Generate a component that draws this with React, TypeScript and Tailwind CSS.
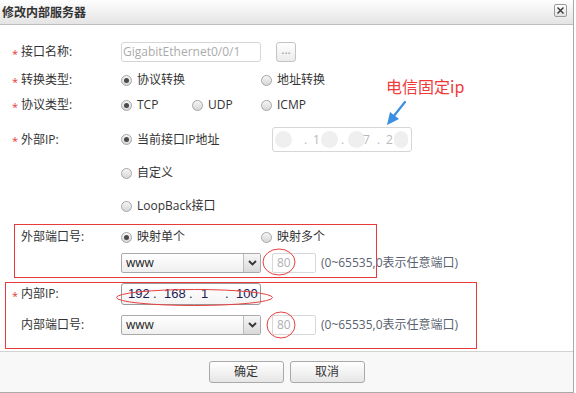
import React from "react";

function Radio({ checked }: { checked?: boolean }) {
  return (
    <span className="w-[11px] h-[11px] rounded-full border border-[#a6a6a6] bg-linear-to-b from-[#f6f6f6] to-[#d6d6d6] flex items-center justify-center shrink-0">
      {checked && <span className="w-[5px] h-[5px] rounded-full bg-[#4a4a4a]" />}
    </span>
  );
}

function RadioItem({ checked, label, width }: { checked?: boolean; label: string; width?: string }) {
  return (
    <div className={`flex items-center gap-[5px] shrink-0 ${width ?? ""}`}>
      <Radio checked={checked} />
      <span className="text-[#333] whitespace-nowrap">{label}</span>
    </div>
  );
}

function Label({ text, req, width }: { text: string; req?: boolean; width: string }) {
  return (
    <div className={`flex items-center shrink-0 ${width}`}>
      {req !== undefined && (
        <span className="w-[9px] text-[#e23b3b] text-[11px] leading-none pt-[2px]">{req ? "*" : ""}</span>
      )}
      <span className="text-[#333] whitespace-nowrap">{text}</span>
    </div>
  );
}

function Select() {
  return (
    <div className="w-[140px] h-[20px] border border-[#a9a9a9] rounded-[2px] flex bg-linear-to-b from-white to-[#efefef] shrink-0">
      <span className="flex-1 pl-[4px] text-[#222] leading-[18px] text-[12px]">www</span>
      <span className="w-[17px] border-l border-[#bcbcbc] bg-linear-to-b from-[#f7f7f7] to-[#d9d9d9] flex items-center justify-center">
        <svg width="9" height="6" viewBox="0 0 9 6">
          <path d="M1 1 L4.5 4.5 L8 1" stroke="#333" strokeWidth="1.8" fill="none" />
        </svg>
      </span>
    </div>
  );
}

function PortRow() {
  return (
    <div className="flex items-center h-[20px] shrink-0">
      <Select />
      <div className="ml-[11px] w-[44px] h-[20px] shrink-0 border border-[#d8d8d8] rounded-[2px] bg-white text-[#b0b0b0] pl-[4px] leading-[18px]">
        80
      </div>
      <span className="ml-[5px] shrink-0 text-[#5a6270] whitespace-nowrap">(0~65535,0表示任意端口)</span>
    </div>
  );
}

export default function App() {
  return (
    <div className="relative w-[576px] h-[393px] bg-white font-['Open_Sans','Noto_Sans_CJK_SC',sans-serif] text-[12px] overflow-hidden">
      <div className="w-[574px] h-[393px] border-r border-b border-[#a9a9a9] flex flex-col">
        {/* Title bar */}
        <div className="h-[25px] shrink-0 border-b border-[#bdbdbd] bg-linear-to-b from-[#fefefe] to-[#e4e4e4] flex items-center justify-between pl-[2px] pr-[6px]">
          <span className="font-bold text-[#333] text-[12px] font-['Noto_Sans_CJK_SC',sans-serif]">修改内部服务器</span>
          <span className="w-[13px] h-[13px] border border-[#9a9a9a] rounded-[2px] bg-linear-to-b from-white to-[#e2e2e2] flex items-center justify-center mt-[-3px]">
            <svg width="9" height="9" viewBox="0 0 9 9">
              <path d="M1.5 1.5 L7.5 7.5 M7.5 1.5 L1.5 7.5" stroke="#333" strokeWidth="1.4" />
            </svg>
          </span>
        </div>

        {/* Body */}
        <div className="flex-1 flex flex-col">
          <div className="mt-[17px] flex items-center h-[20px] pl-[12px]">
            <Label text="接口名称:" req width="w-[109px]" />
            <div className="w-[140px] h-[20px] border border-[#d6d6d6] rounded-[3px] text-[#ababab] pl-[1px] leading-[18px]">
              GigabitEthernet0/0/1
            </div>
            <div className="ml-[15px] w-[20px] h-[20px] border border-[#c4c4c4] rounded-[3px] bg-linear-to-b from-white to-[#ebebeb] text-[#999] text-center leading-[14px]">
              ...
            </div>
          </div>

          <div className="mt-[8px] flex items-center h-[20px] pl-[12px]">
            <Label text="转换类型:" req width="w-[109px]" />
            <RadioItem checked label="协议转换" width="w-[140px]" />
            <RadioItem label="地址转换" />
          </div>

          <div className="mt-[5px] flex items-center h-[20px] pl-[12px]">
            <Label text="协议类型:" req width="w-[109px]" />
            <RadioItem checked label="TCP" width="w-[71px]" />
            <RadioItem label="UDP" width="w-[69px]" />
            <RadioItem label="ICMP" />
          </div>

          <div className="mt-[12px] flex items-center h-[25px] pl-[12px]">
            <Label text="外部IP:" req width="w-[109px]" />
            <RadioItem checked label="当前接口IP地址" width="w-[151px]" />
            <div className="relative w-[140px] h-[25px] border border-[#d6d6d6] rounded-[3px] bg-white text-[#b8b8b8] flex items-center">
              <span className="absolute left-[2px] top-[3px] w-[17px] h-[17px] rounded-full bg-[#efefef]" />
              <span className="absolute left-[48px] top-[3px] w-[17px] h-[17px] rounded-full bg-[#efefef]" />
              <span className="absolute left-[75px] top-[3px] w-[17px] h-[17px] rounded-full bg-[#efefef]" />
              <span className="absolute left-[121px] top-[3px] w-[14px] h-[17px] rounded-full bg-[#efefef]" />
              <span className="absolute left-[31px] text-[12px]">.</span>
              <span className="absolute left-[40px] text-[12px]">1</span>
              <span className="absolute left-[68px] text-[12px]">.</span>
              <span className="absolute left-[90px] text-[12px]">7</span>
              <span className="absolute left-[104px] text-[12px]">.</span>
              <span className="absolute left-[113px] text-[12px]">2</span>
            </div>
          </div>

          <div className="mt-[11px] flex items-center h-[20px] pl-[121px]">
            <RadioItem label="自定义" />
          </div>

          <div className="mt-[13px] flex items-center h-[20px] pl-[121px]">
            <RadioItem label="LoopBack接口" />
          </div>

          {/* red box 1 */}
          <div className="mt-[8px] ml-[14px] w-[363px] border border-[#e83a3a] pt-[2px] pb-[4px] flex flex-col">
            <div className="flex items-center h-[20px]">
              <Label text="外部端口号:" width="w-[106px] pl-[6px]" />
              <RadioItem checked label="映射单个" width="w-[140px]" />
              <RadioItem label="映射多个" />
            </div>
            <div className="mt-[6px] pl-[106px] flex">
              <PortRow />
            </div>
          </div>

          {/* red box 2 */}
          <div className="mt-[4px] ml-[5px] w-[472px] border border-[#e83a3a] pb-[13px] flex flex-col">
            <div className="flex items-center h-[22px]">
              <Label text="内部IP:" req width="w-[115px] pl-[6px]" />
              <div className="w-[140px] h-[22px] border border-[#9a9a9a] rounded-[3px] bg-linear-to-b from-white to-[#f4f4f4] flex items-center font-['Liberation_Sans',sans-serif] text-[13px] text-[#1b1b55]">
                <span className="w-[31px] pl-[6px]">192</span>
                <span className="w-[5px]">.</span>
                <span className="w-[31px] pl-[6px]">168</span>
                <span className="w-[5px]">.</span>
                <span className="w-[31px] pl-[7px]">1</span>
                <span className="w-[5px]">.</span>
                <span className="pl-[6px]">100</span>
              </div>
            </div>
            <div className="mt-[10px] flex items-center">
              <Label text="内部端口号:" req={false} width="w-[115px] pl-[6px]" />
              <PortRow />
            </div>
          </div>

          {/* footer */}
          <div className="mt-[2px] flex-1 border-t border-[#d2d2d2] bg-[#f8f8f8] flex justify-center gap-[6px] pt-[9px]">
            <div className="w-[75px] h-[22px] border border-[#a9a9a9] rounded-[3px] bg-linear-to-b from-white to-[#e6e6e6] flex items-center justify-center text-[#333]">
              确定
            </div>
            <div className="w-[75px] h-[22px] border border-[#a9a9a9] rounded-[3px] bg-linear-to-b from-white to-[#e6e6e6] flex items-center justify-center text-[#333]">
              取消
            </div>
          </div>
        </div>
      </div>

      {/* annotations */}
      <span className="absolute left-[386px] top-[75px] text-[16px] text-[#f03a3a] font-['Noto_Sans_CJK_SC',sans-serif] leading-[22px]">电信固定ip</span>
      <svg className="absolute left-[384px] top-[100px]" width="26" height="28" viewBox="0 0 26 28">
        <path d="M21 2 L9 17" stroke="#3b8fe0" strokeWidth="2.2" strokeLinecap="round" />
        <path d="M3 25 L6 12 L15 19 Z" fill="#3b8fe0" />
      </svg>
      <svg className="absolute left-0 top-0 pointer-events-none" width="576" height="393">
        <ellipse cx="279" cy="262" rx="16" ry="13" fill="none" stroke="#e84040" strokeWidth="1" />
        <ellipse cx="281" cy="325" rx="14" ry="13" fill="none" stroke="#e84040" strokeWidth="1" />
        <ellipse cx="194.5" cy="297.5" rx="78" ry="8" fill="none" stroke="#e84040" strokeWidth="1" />
      </svg>
    </div>
  );
}
